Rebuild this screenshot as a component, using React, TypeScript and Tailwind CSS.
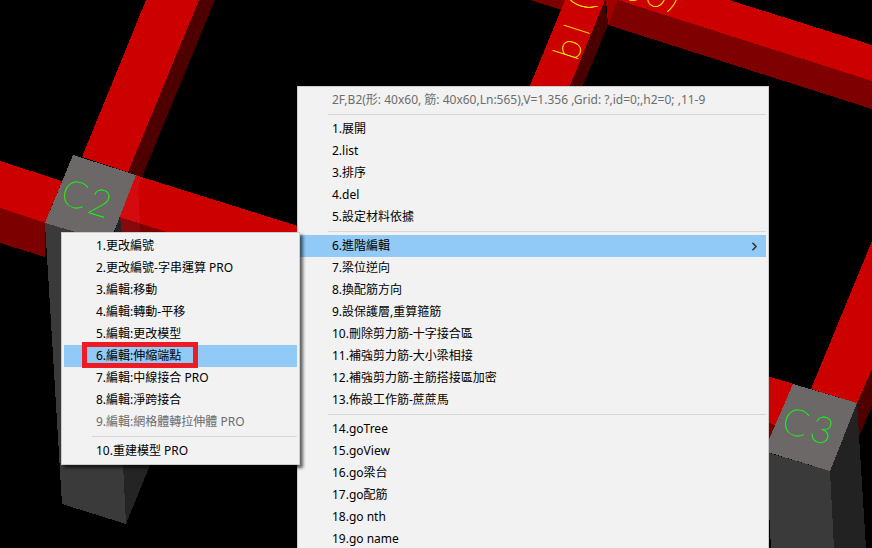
import { ChevronRight } from 'lucide-react';

type MenuItem = {
  label: string;
  disabled?: boolean;
  active?: boolean;
  marked?: boolean;
  submenu?: MenuItem[][];
};

const editGroups: MenuItem[][] = [
  [
    { label: '1.更改編號' },
    { label: '2.更改編號-字串運算 PRO' },
    { label: '3.編輯:移動' },
    { label: '4.編輯:轉動-平移' },
    { label: '5.編輯:更改模型' },
    { label: '6.編輯:伸縮端點', active: true, marked: true },
    { label: '7.編輯:中線接合 PRO' },
    { label: '8.編輯:淨跨接合' },
    { label: '9.編輯:網格體轉拉伸體 PRO', disabled: true },
  ],
  [{ label: '10.重建模型 PRO' }],
];

const mainGroups: MenuItem[][] = [
  [{ label: '2F,B2(形: 40x60, 筋: 40x60,Ln:565),V=1.356 ,Grid: ?,id=0;,h2=0; ,11-9', disabled: true }],
  [
    { label: '1.展開' },
    { label: '2.list' },
    { label: '3.排序' },
    { label: '4.del' },
    { label: '5.設定材料依據' },
  ],
  [
    { label: '6.進階編輯', active: true, submenu: editGroups },
    { label: '7.梁位逆向' },
    { label: '8.換配筋方向' },
    { label: '9.設保護層,重算箍筋' },
    { label: '10.刪除剪力筋-十字接合區' },
    { label: '11.補強剪力筋-大小梁相接' },
    { label: '12.補強剪力筋-主筋搭接區加密' },
    { label: '13.佈設工作筋-蔗蔗馬' },
  ],
  [
    { label: '14.goTree' },
    { label: '15.goView' },
    { label: '16.go梁台' },
    { label: '17.go配筋' },
    { label: '18.go nth' },
    { label: '19.go name' },
  ],
];

function Menu({ groups, className }: { groups: MenuItem[][]; className: string }) {
  return (
    <div role="menu" className={`flex flex-col border border-[#cccccc] bg-[#f2f2f2] p-[2px] ${className}`}>
      {groups.map((group, i) => (
        <div key={i} role="group" className="flex flex-col">
          {i > 0 && <div role="separator" className="my-[3px] ml-7 h-px bg-[#d7d7d7]" />}
          {group.map((item) => (
            <div key={item.label} className="relative flex">
              <button
                type="button"
                role="menuitem"
                disabled={item.disabled}
                aria-haspopup={item.submenu ? 'menu' : undefined}
                className={`flex h-[22px] flex-1 items-center justify-between pr-[5px] pl-8 text-left whitespace-nowrap ${
                  item.active ? 'bg-[#91c9f7]' : ''
                } ${item.disabled ? 'text-[#6d6d6d]' : 'text-black'}`}
              >
                <span>{item.label}</span>
                {item.submenu && <ChevronRight size={13} strokeWidth={3} className="text-[#333333]" />}
              </button>
              {item.marked && (
                <span className="pointer-events-none absolute -top-[3px] -bottom-px left-[18px] w-[116px] border-[5px] border-[#ed1c24]" />
              )}
              {item.submenu && (
                <Menu
                  groups={item.submenu}
                  className="absolute -top-[3px] right-full z-10 w-[239px] shadow-[3px_3px_3px_rgba(0,0,0,0.6)]"
                />
              )}
            </div>
          ))}
        </div>
      ))}
    </div>
  );
}

function Scene() {
  return (
    <svg width="872" height="548" viewBox="0 0 872 548" className="absolute inset-0" aria-hidden="true">
      <g shapeRendering="crispEdges">
        {/* beams around C2 */}
        <polygon points="146,0 199,0 128,172 82,157" fill="#cd0000" />
        <polygon points="199,0 215,0 142,177 128,172" fill="#4e0000" />
        <polygon points="0,161 62,181 45,223 0,208" fill="#cd0000" />
        <polygon points="0,208 45,223 45,257 0,243" fill="#7d0000" />
        <polygon points="135,175 320,233 320,280 119,217" fill="#cd0000" />
        <polygon points="135,175 142,177 138,187 140,224 119,217" fill="#d30a0e" />
        <polygon points="119,217 320,280 320,310 119,250" fill="#7d0000" />
        <polygon points="119,217 140,224 141,250 119,250" fill="#850a0e" />

        {/* column C2 */}
        <polygon points="45,223 112,242 126,524 62,504" fill="#3a3a3a" />
        <polygon points="119,217 112,242 126,524 150,465 120,217" fill="#242424" />
        <polygon points="73,155 136,175 110,242 45,223" fill="#6b6867" />

        {/* beams at the top */}
        <polygon points="530,0 566,0 562,10" fill="#7d0000" />
        <polygon points="565,0 605,0 570,88 529,88" fill="#cd0000" />
        <polygon points="605,0 608,25 582,88 569,88" fill="#4a0000" />
        <polygon points="618,0 729,0 872,45 872,81" fill="#cd0000" />
        <polygon points="618,0 872,81 872,109 608,25" fill="#7f0000" />
        <polygon points="606,0 618,0 608,25" fill="#a00000" />

        {/* beams around C3 */}
        <polygon points="872,241 872,369 857,403 811,389" fill="#cd0000" />
        <polygon points="872,369 872,406 859,437 857,403" fill="#4e0000" />
        <polygon points="760,374 794,384 775,425 760,420" fill="#cd0000" />
        <polygon points="760,420 775,425 769,444 760,444" fill="#7d0000" />

        {/* column C3 */}
        <polygon points="766,452 830,471 834,548 771,548" fill="#3a3a3a" />
        <polygon points="857,403 866,548 834,548 830,471" fill="#222222" />
        <polygon points="793,384 857,403 830,471 764,451" fill="#6b6867" />
      </g>

      {/* member tags lying on the faces */}
      <g className="font-['Lato',sans-serif] font-thin" fontSize="37" strokeWidth="0.3">
        <g fill="#00ff00" stroke="#00ff00">
          <text transform="translate(59 203) rotate(17)">C</text>
          <text transform="translate(86 212) rotate(17)">2</text>
          <text transform="translate(780 431) rotate(17)">C</text>
          <text transform="translate(808 439) rotate(17)">3</text>
        </g>
        <g fill="#ffff00" stroke="#ffff00">
          <text transform="translate(577 62) rotate(-72)">b</text>
          <text transform="translate(588 37) rotate(-72)">l</text>
          <text transform="translate(591 12) rotate(-72)">(</text>
          <text transform="translate(620 -3) rotate(17)">6</text>
          <text transform="translate(643 3) rotate(17)">0</text>
          <text transform="translate(667 7) rotate(17)">)</text>
        </g>
      </g>
    </svg>
  );
}

export default function App() {
  return (
    <main className="relative h-screen overflow-hidden bg-black font-['Noto_Sans','Noto_Sans_CJK_TC',sans-serif] text-xs">
      <Scene />
      <Menu groups={mainGroups} className="absolute top-[86px] left-[297px] w-[472px]" />
    </main>
  );
}
